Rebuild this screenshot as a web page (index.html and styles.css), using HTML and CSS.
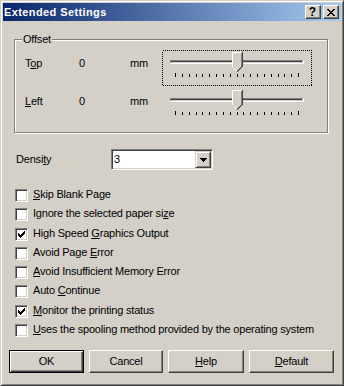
FILE: index.html
```html
<!DOCTYPE html>
<html>
<head>
<meta charset="utf-8">
<link rel="stylesheet" href="styles.css">
</head>
<body>
<div class="window">
  <div class="titlebar">
    <span class="title">Extended Settings</span>
    <div class="caption-btns">
      <span class="cbtn help">?</span>
      <span class="cbtn close"><svg width="8" height="7" viewBox="0 0 8 7" shape-rendering="crispEdges"><path fill="#000" d="M0 0h2v1H0zM6 0h2v1H6zM1 1h2v1H1zM5 1h2v1H5zM2 2h4v1H2zM3 3h2v1H3zM2 4h4v1H2zM1 5h2v1H1zM5 5h2v1H5zM0 6h2v1H0zM6 6h2v1H6z"/></svg></span>
    </div>
  </div>
  <div class="content">
    <div class="group">
      <span class="legend">Offset</span>
      <div class="srow">
        <span class="lbl">T<u>o</u>p</span><span class="num">0</span><span class="unit">mm</span>
        <svg class="slider" width="150" height="36" viewBox="0 0 150 36" shape-rendering="crispEdges">
          <rect x="0.5" y="0.5" width="149" height="35" fill="none" stroke="#000" stroke-dasharray="1 1"/>
          <g class="track">
            <rect x="8" y="10" width="133" height="1" fill="#808080"/>
            <rect x="8" y="11" width="1" height="2" fill="#808080"/>
            <rect x="9" y="11" width="131" height="1" fill="#404040"/>
            <rect x="8" y="13" width="134" height="1" fill="#fff"/>
            <rect x="141" y="10" width="1" height="4" fill="#fff"/>
          </g>
          <g class="thumb">
            <rect x="71" y="3" width="8" height="14" fill="#d4d0c8"/>
            <rect x="70" y="2" width="10" height="1" fill="#fff"/>
            <rect x="70" y="2" width="1" height="15" fill="#fff"/>
            <path fill="#fff" d="M71 17h1v1h-1zM72 18h1v1h-1zM73 19h1v1h-1zM74 20h1v1h-1z"/>
            <rect x="71" y="17" width="7" height="1" fill="#d4d0c8"/>
            <rect x="79" y="3" width="1" height="14" fill="#808080"/>
            <path fill="#808080" d="M78 17h1v1h-1zM77 18h1v1h-1zM76 19h1v1h-1zM75 20h1v1h-1z"/>
            <rect x="80" y="2" width="1" height="15" fill="#404040"/>
            <path fill="#404040" d="M79 17h1v1h-1zM78 18h1v1h-1zM77 19h1v1h-1zM76 20h1v1h-1zM75 21h1v1h-1z"/>
          </g>
          <path fill="#000" d="M13 23h1v4h-1zM20 24h1v3h-1zM27 24h1v3h-1zM34 24h1v3h-1zM40 24h1v3h-1zM47 24h1v3h-1zM54 24h1v3h-1zM61 24h1v3h-1zM68 24h1v3h-1zM75 24h1v3h-1zM81 24h1v3h-1zM88 24h1v3h-1zM95 24h1v3h-1zM102 24h1v3h-1zM109 24h1v3h-1zM116 24h1v3h-1zM122 24h1v3h-1zM129 24h1v3h-1zM136 23h1v4h-1z"/>
        </svg>
      </div>
      <div class="srow">
        <span class="lbl"><u>L</u>eft</span><span class="num">0</span><span class="unit">mm</span>
        <svg class="slider" width="150" height="36" viewBox="0 0 150 36" shape-rendering="crispEdges">
          <g class="track">
            <rect x="8" y="10" width="133" height="1" fill="#808080"/>
            <rect x="8" y="11" width="1" height="2" fill="#808080"/>
            <rect x="9" y="11" width="131" height="1" fill="#404040"/>
            <rect x="8" y="13" width="134" height="1" fill="#fff"/>
            <rect x="141" y="10" width="1" height="4" fill="#fff"/>
          </g>
          <g class="thumb">
            <rect x="71" y="3" width="8" height="14" fill="#d4d0c8"/>
            <rect x="70" y="2" width="10" height="1" fill="#fff"/>
            <rect x="70" y="2" width="1" height="15" fill="#fff"/>
            <path fill="#fff" d="M71 17h1v1h-1zM72 18h1v1h-1zM73 19h1v1h-1zM74 20h1v1h-1z"/>
            <rect x="71" y="17" width="7" height="1" fill="#d4d0c8"/>
            <rect x="79" y="3" width="1" height="14" fill="#808080"/>
            <path fill="#808080" d="M78 17h1v1h-1zM77 18h1v1h-1zM76 19h1v1h-1zM75 20h1v1h-1z"/>
            <rect x="80" y="2" width="1" height="15" fill="#404040"/>
            <path fill="#404040" d="M79 17h1v1h-1zM78 18h1v1h-1zM77 19h1v1h-1zM76 20h1v1h-1zM75 21h1v1h-1z"/>
          </g>
          <path fill="#000" d="M13 23h1v4h-1zM20 24h1v3h-1zM27 24h1v3h-1zM34 24h1v3h-1zM40 24h1v3h-1zM47 24h1v3h-1zM54 24h1v3h-1zM61 24h1v3h-1zM68 24h1v3h-1zM75 24h1v3h-1zM81 24h1v3h-1zM88 24h1v3h-1zM95 24h1v3h-1zM102 24h1v3h-1zM109 24h1v3h-1zM116 24h1v3h-1zM122 24h1v3h-1zM129 24h1v3h-1zM136 23h1v4h-1z"/>
        </svg>
      </div>
    </div>

    <div class="density">
      <span class="dlbl">Densi<u>t</u>y</span>
      <div class="combo">
        <span class="cval">3</span>
        <span class="dd"><svg width="7" height="4" viewBox="0 0 7 4" shape-rendering="crispEdges"><path fill="#000" d="M0 0h7v1H0zM1 1h5v1H1zM2 2h3v1H2zM3 3h1v1H3z"/></svg></span>
      </div>
    </div>

    <ul class="checks">
      <li class="check"><span class="box"></span><span class="ctext"><u>S</u>kip Blank Page</span></li>
      <li class="check"><span class="box"></span><span class="ctext">Ignore the selected paper si<u>z</u>e</span></li>
      <li class="check"><span class="box"><svg width="11" height="11" viewBox="0 0 11 11" shape-rendering="crispEdges"><path fill="#000" d="M2 4h1v3H2zM3 5h1v3H3zM4 6h1v3H4zM5 5h1v3H5zM6 4h1v3H6zM7 3h1v3H7zM8 2h1v3H8z"/></svg></span><span class="ctext">High Speed <u>G</u>raphics Output</span></li>
      <li class="check"><span class="box"></span><span class="ctext">Avoid Page <u>E</u>rror</span></li>
      <li class="check"><span class="box"></span><span class="ctext"><u>A</u>void Insufficient Memory Error</span></li>
      <li class="check"><span class="box"></span><span class="ctext">Auto <u>C</u>ontinue</span></li>
      <li class="check"><span class="box"><svg width="11" height="11" viewBox="0 0 11 11" shape-rendering="crispEdges"><path fill="#000" d="M2 4h1v3H2zM3 5h1v3H3zM4 6h1v3H4zM5 5h1v3H5zM6 4h1v3H6zM7 3h1v3H7zM8 2h1v3H8z"/></svg></span><span class="ctext"><u>M</u>onitor the printing status</span></li>
      <li class="check"><span class="box"></span><span class="ctext"><u>U</u>ses the spooling method provided by the operating system</span></li>
    </ul>

    <div class="buttons">
      <span class="btn default w-ok">OK</span>
      <span class="btn w-cancel">Cancel</span>
      <span class="btn w-help"><u>H</u>elp</span>
      <span class="btn w-default"><u>D</u>efault</span>
    </div>
  </div>
</div>
</body>
</html>
```
FILE: styles.css
```css
* { box-sizing: border-box; }
html, body { margin: 0; padding: 0; background: #d4d0c8; }
body {
  font-family: "Liberation Sans", Arial, sans-serif;
  font-size: 11px;
  letter-spacing: -0.2px;
  color: #000;
}
u { text-decoration: underline; text-underline-offset: 1px; }

.window {
  width: 344px;
  height: 386px;
  border: 1px solid;
  border-color: #d4d0c8 #404040 #404040 #d4d0c8;
  box-shadow: inset 1px 1px 0 #fff, inset -1px -1px 0 #808080;
  padding: 2px;
  background: #d4d0c8;
}

.titlebar {
  height: 18px;
  background: linear-gradient(to right, #0a246a, #a6caf0);
  display: flex;
  align-items: center;
  justify-content: space-between;
  padding: 0 2px 0 1px;
}
.title {
  color: #fff;
  font-weight: bold;
  letter-spacing: 0.4px;
  line-height: 14px;
}
.caption-btns { display: flex; gap: 2px; }
.cbtn {
  width: 16px;
  height: 14px;
  background: #d4d0c8;
  border: 1px solid;
  border-color: #fff #404040 #404040 #fff;
  box-shadow: inset -1px -1px 0 #808080;
  display: flex;
  align-items: center;
  justify-content: center;
}
.cbtn.help {
  font-weight: bold;
  font-size: 12px;
  line-height: 12px;
  letter-spacing: 0;
  padding-right: 1px;
}
.cbtn.close svg { display: block; margin-right: 1px; }

.content { padding: 18px 0 0 6px; }

.group {
  position: relative;
  width: 314px;
  height: 94px;
  margin-left: 5px;
  border: 1px solid #808080;
  box-shadow: inset 1px 1px 0 #fff, 1px 1px 0 #fff;
  padding: 10px 0 0 10px;
}
.legend {
  position: absolute;
  top: -7px;
  left: 7px;
  padding: 0 1px;
  background: #d4d0c8;
  line-height: 13px;
}
.srow { display: flex; align-items: flex-start; height: 38px; }
.srow .lbl, .srow .num, .srow .unit { line-height: 13px; margin-top: 7px; }
.lbl { width: 54px; }
.num { width: 51px; }
.unit { width: 32px; }
.slider { display: block; }

.density {
  display: flex;
  align-items: center;
  height: 21px;
  margin: 16px 0 0 6px;
}
.dlbl { width: 96px; line-height: 13px; padding-left: 1px; }
.combo {
  width: 102px;
  height: 21px;
  background: #fff;
  border: 1px solid;
  border-color: #808080 #fff #fff #808080;
  box-shadow: inset 1px 1px 0 #404040, inset -1px -1px 0 #d4d0c8;
  padding: 1px;
  display: flex;
}
.cval { flex: 1; line-height: 17px; padding-left: 1px; }
.dd {
  width: 16px;
  height: 17px;
  background: #d4d0c8;
  border: 1px solid;
  border-color: #d4d0c8 #404040 #404040 #d4d0c8;
  box-shadow: inset 1px 1px 0 #fff, inset -1px -1px 0 #808080;
  display: flex;
  align-items: center;
  justify-content: center;
}
.dd svg { display: block; }

.checks { list-style: none; margin: 16px 0 0 6px; padding: 0; }
.check { display: flex; align-items: flex-start; height: 19.25px; }
.box {
  width: 13px;
  height: 13px;
  margin-top: 3px;
  margin-right: 5px;
  background: #fff;
  border: 1px solid;
  border-color: #808080 #fff #fff #808080;
  box-shadow: inset 1px 1px 0 #404040, inset -1px -1px 0 #d4d0c8;
  flex: none;
}
.box svg { display: block; }
.ctext { line-height: 13px; margin-top: 2px; white-space: nowrap; }

.buttons { display: flex; gap: 5px; margin-top: 10px; }
.btn {
  height: 23px;
  border: 1px solid;
  border-color: #fff #404040 #404040 #fff;
  box-shadow: inset -1px -1px 0 #808080;
  display: flex;
  align-items: center;
  justify-content: center;
  line-height: 13px;
}
.btn.default {
  border-color: #000;
  box-shadow: inset 1px 1px 0 #fff, inset -1px -1px 0 #404040, inset -2px -2px 0 #808080;
}
.w-ok { width: 75px; }
.w-cancel { width: 74px; }
.w-help { width: 76px; }
.w-default { width: 85px; }
```
